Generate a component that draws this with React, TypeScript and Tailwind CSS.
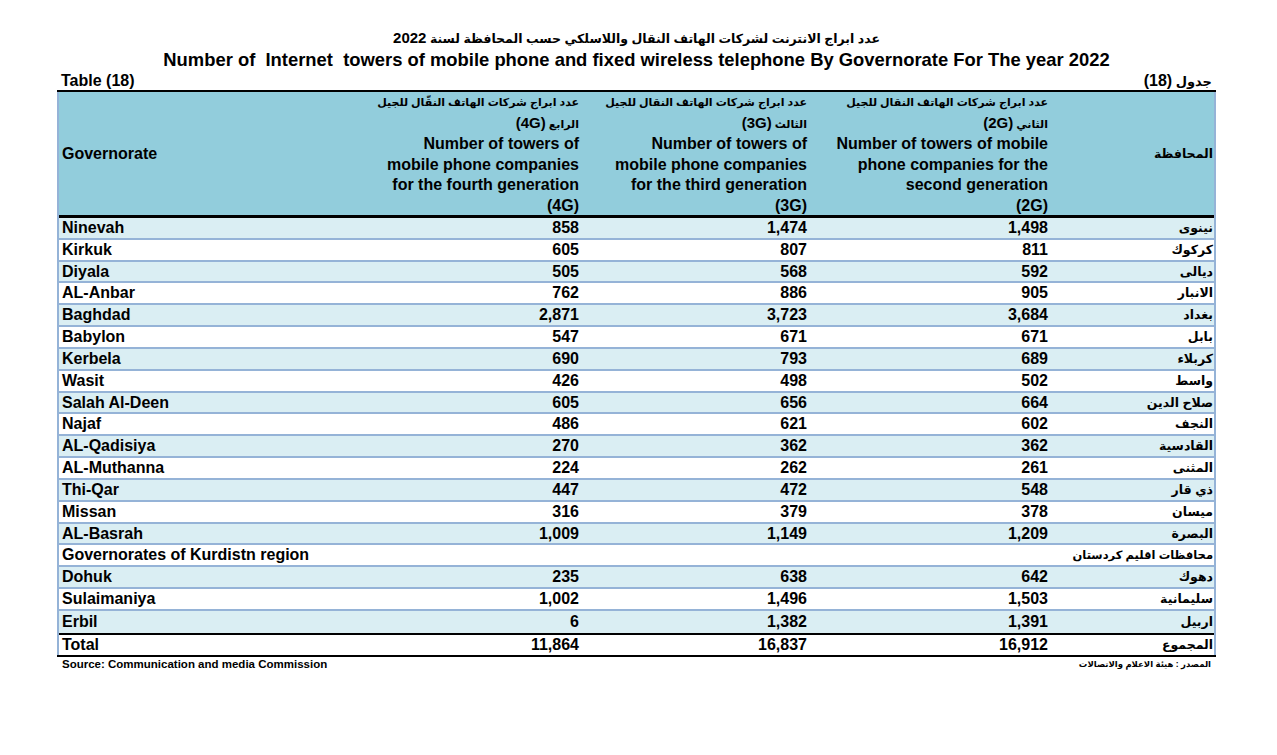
const rows: [string, string, string, string, string][] = [
  ["Ninevah", "858", "1,474", "1,498", "نينوى"],
  ["Kirkuk", "605", "807", "811", "كركوك"],
  ["Diyala", "505", "568", "592", "ديالى"],
  ["AL-Anbar", "762", "886", "905", "الانبار"],
  ["Baghdad", "2,871", "3,723", "3,684", "بغداد"],
  ["Babylon", "547", "671", "671", "بابل"],
  ["Kerbela", "690", "793", "689", "كربلاء"],
  ["Wasit", "426", "498", "502", "واسط"],
  ["Salah Al-Deen", "605", "656", "664", "صلاح الدين"],
  ["Najaf", "486", "621", "602", "النجف"],
  ["AL-Qadisiya", "270", "362", "362", "القادسية"],
  ["AL-Muthanna", "224", "262", "261", "المثنى"],
  ["Thi-Qar", "447", "472", "548", "ذي قار"],
  ["Missan", "316", "379", "378", "ميسان"],
  ["AL-Basrah", "1,009", "1,149", "1,209", "البصرة"],
];

const kurdistan: [string, string, string, string, string][] = [
  ["Dohuk", "235", "638", "642", "دهوك"],
  ["Sulaimaniya", "1,002", "1,496", "1,503", "سليمانية"],
  ["Erbil", "6", "1,382", "1,391", "اربيل"],
];

const grid = "grid grid-cols-[326px_199px_228px_241px_161px]";
const font = "font-['Liberation_Sans','DejaVu_Sans',sans-serif]";

function HeaderCell({ ar, gen, en }: { ar: string; gen: string; en: string[] }) {
  return (
    <div className="flex flex-col items-end pr-[5px] text-right leading-[20.5px]">
      <div dir="rtl" className="whitespace-nowrap text-[11px]">{ar}</div>
      <div dir="rtl" className="whitespace-nowrap text-[11px]">
        {gen} <span className="text-[15px]">{en[en.length - 1]}</span>
      </div>
      {en.map((l) => (
        <div key={l} className="whitespace-nowrap text-[16px]">{l}</div>
      ))}
    </div>
  );
}

function Row({ r, i, last }: { r: [string, string, string, string, string]; i: number; last?: boolean }) {
  return (
    <div
      className={`${grid} h-[21.83px] items-center text-[16px] leading-[20px] ${i % 2 === 0 ? "bg-[#daeef3]" : "bg-white"} ${last ? "" : "border-b-2 border-[#95b3d7]"}`}
    >
      <div className="pl-[3px]">{r[0]}</div>
      <div className="pr-[5px] text-right">{r[1]}</div>
      <div className="pr-[5px] text-right">{r[2]}</div>
      <div className="pr-[5px] text-right">{r[3]}</div>
      <div dir="rtl" className="pr-[1px] text-[12.5px]">{r[4]}</div>
    </div>
  );
}

export default function App() {
  return (
    <div className={`min-h-[755px] w-[1277px] bg-white font-bold text-black ${font}`}>
      <div className="ml-[57px] w-[1159px] pt-[27px]">
        <div dir="rtl" className="h-[22px] text-center text-[12.5px] leading-[22px]">
          عدد ابراج الانترنت لشركات الهاتف النقال واللاسلكي حسب المحافظة لسنة <span className="text-[15px]">2022</span>
        </div>
        <div className="h-[22px] whitespace-pre text-center text-[18.4px] leading-[22px]">
          Number of  Internet  towers of mobile phone and fixed wireless telephone By Governorate For The year 2022
        </div>
        <div className="flex h-[19px] items-center justify-between px-[4px] text-[16px]">
          <span>Table (18)</span>
          <span dir="rtl" className="text-[13px]">
            جدول <span className="text-[16px]">(18)</span>
          </span>
        </div>

        <div className="border-t-2 border-black">
          <div className="border-x-2 border-[#95b3d7]">
            <div className={`${grid} h-[123px] items-center bg-[#92cddc]`}>
              <div className="pl-[3px] text-[16px]">Governorate</div>
              <HeaderCell
                ar="عدد ابراج شركات الهاتف النقّال للجيل"
                gen="الرابع"
                en={["Number of towers of", "mobile phone companies", "for the fourth generation", "(4G)"]}
              />
              <HeaderCell
                ar="عدد ابراج شركات الهاتف النقال للجيل"
                gen="الثالث"
                en={["Number of towers of", "mobile phone companies", "for the third generation", "(3G)"]}
              />
              <HeaderCell
                ar="عدد ابراج شركات الهاتف النقال للجيل"
                gen="الثاني"
                en={["Number of towers of mobile", "phone companies for the", "second generation", "(2G)"]}
              />
              <div dir="rtl" className="pr-[1px] text-[12.5px]">المحافظة</div>
            </div>
            <div className="border-t-[3px] border-black">
              {rows.map((r, i) => (
                <Row key={r[0]} r={r} i={i} />
              ))}
              <div className="flex h-[21.83px] items-center justify-between border-b-2 border-[#95b3d7] bg-white text-[16px]">
                <span className="pl-[3px]">Governorates of Kurdistn region</span>
                <span dir="rtl" className="pr-[1px] text-[11.5px]">محافظات اقليم كردستان</span>
              </div>
              {kurdistan.map((r, i) => (
                <Row key={r[0]} r={r} i={i} last={i === kurdistan.length - 1} />
              ))}
            </div>
            <div className="border-t-2 border-black">
              <div className={`${grid} h-[20px] items-center bg-white text-[16px] leading-[20px]`}>
                <div className="pl-[3px]">Total</div>
                <div className="pr-[5px] text-right">11,864</div>
                <div className="pr-[5px] text-right">16,837</div>
                <div className="pr-[5px] text-right">16,912</div>
                <div dir="rtl" className="pr-[1px] text-[12.5px]">المجموع</div>
              </div>
            </div>
          </div>
        </div>
        <div className="border-t-2 border-black">
          <div className="flex h-[16px] items-center justify-between px-[5px]">
            <span className="text-[11.5px]">Source: Communication and media Commission</span>
            <span dir="rtl" className="text-[8.5px]">المصدر : هيئة الاعلام والاتصالات</span>
          </div>
        </div>
      </div>
    </div>
  );
}
